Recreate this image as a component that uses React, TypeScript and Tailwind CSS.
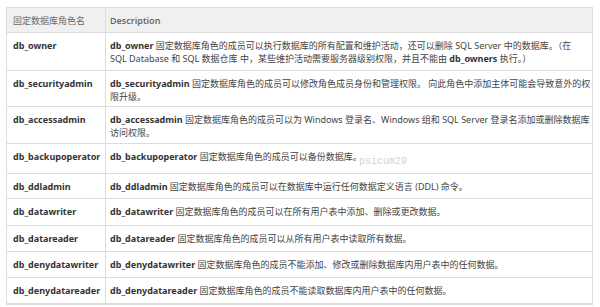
import React from "react";

type Row = { name: string; h: string; lines: React.ReactNode[] };

const B = ({ children }: { children: React.ReactNode }) => (
  <span className="font-bold text-[#333]">{children}</span>
);

const rows: Row[] = [
  {
    name: "db_owner",
    h: "h-[38px]",
    lines: [
      <>
        <B>db_owner</B> 固定数据库角色的成员可以执行数据库的所有配置和维护活动，还可以删除 SQL Server 中的数据库。（在
      </>,
      <>
        SQL Database 和 SQL 数据仓库 中，某些维护活动需要服务器级别权限，并且不能由 <B>db_owners</B> 执行。）
      </>,
    ],
  },
  {
    name: "db_securityadmin",
    h: "h-[36px]",
    lines: [
      <>
        <B>db_securityadmin</B> 固定数据库角色的成员可以修改角色成员身份和管理权限。 向此角色中添加主体可能会导致意外的权
      </>,
      <>限升级。</>,
    ],
  },
  {
    name: "db_accessadmin",
    h: "h-[37px]",
    lines: [
      <>
        <B>db_accessadmin</B> 固定数据库角色的成员可以为 Windows 登录名、Windows 组和 SQL Server 登录名添加或删除数据库
      </>,
      <>访问权限。</>,
    ],
  },
  {
    name: "db_backupoperator",
    h: "h-[30px]",
    lines: [
      <>
        <B>db_backupoperator</B> 固定数据库角色的成员可以备份数据库。
      </>,
    ],
  },
  {
    name: "db_ddladmin",
    h: "h-[25px]",
    lines: [
      <>
        <B>db_ddladmin</B> 固定数据库角色的成员可以在数据库中运行任何数据定义语言 (DDL) 命令。
      </>,
    ],
  },
  {
    name: "db_datawriter",
    h: "h-[27px]",
    lines: [
      <>
        <B>db_datawriter</B> 固定数据库角色的成员可以在所有用户表中添加、删除或更改数据。
      </>,
    ],
  },
  {
    name: "db_datareader",
    h: "h-[26px]",
    lines: [
      <>
        <B>db_datareader</B> 固定数据库角色的成员可以从所有用户表中读取所有数据。
      </>,
    ],
  },
  {
    name: "db_denydatawriter",
    h: "h-[26px]",
    lines: [
      <>
        <B>db_denydatawriter</B> 固定数据库角色的成员不能添加、修改或删除数据库内用户表中的任何数据。
      </>,
    ],
  },
  {
    name: "db_denydatareader",
    h: "h-[26px]",
    lines: [
      <>
        <B>db_denydatareader</B> 固定数据库角色的成员不能读取数据库内用户表中的任何数据。
      </>,
    ],
  },
];

export default function App() {
  return (
    <div
      className="w-[600px] h-[307px] bg-white pt-[7px] pl-[6px] text-[9px] leading-[13px] text-[#444]"
      style={{ fontFamily: '"Noto Sans", "Noto Sans CJK SC", sans-serif' }}
    >
      <div className="relative w-[587px] border border-[#dcdcdc]">
        <div className="flex h-[25px] bg-[#f0f0f0] border-b border-[#dcdcdc] text-[#6a6a6a]">
          <div className="w-[99px] border-r border-[#dcdcdc] pl-[6px] pt-[6px]">固定数据库角色名</div>
          <div className="flex-1 pl-[4px] pt-[6px] font-semibold">Description</div>
        </div>
        {rows.map((r) => (
          <div key={r.name} className={`flex ${r.h} border-b border-[#dcdcdc] last:border-b-0`}>
            <div className="w-[99px] shrink-0 border-r border-[#dcdcdc] pl-[6px] pt-[6px] font-bold text-[#333] whitespace-nowrap">
              {r.name}
            </div>
            <div className="flex-1 pl-[4px] pt-[6px]">
              {r.lines.map((l, i) => (
                <div key={i} className="whitespace-nowrap">
                  {l}
                </div>
              ))}
            </div>
          </div>
        ))}
        <div
          className="absolute left-[352px] top-[147px] text-[10px] text-[#d4d4d4]"
          style={{ fontFamily: '"Liberation Mono", monospace' }}
        >
          psicum29
        </div>
      </div>
    </div>
  );
}
